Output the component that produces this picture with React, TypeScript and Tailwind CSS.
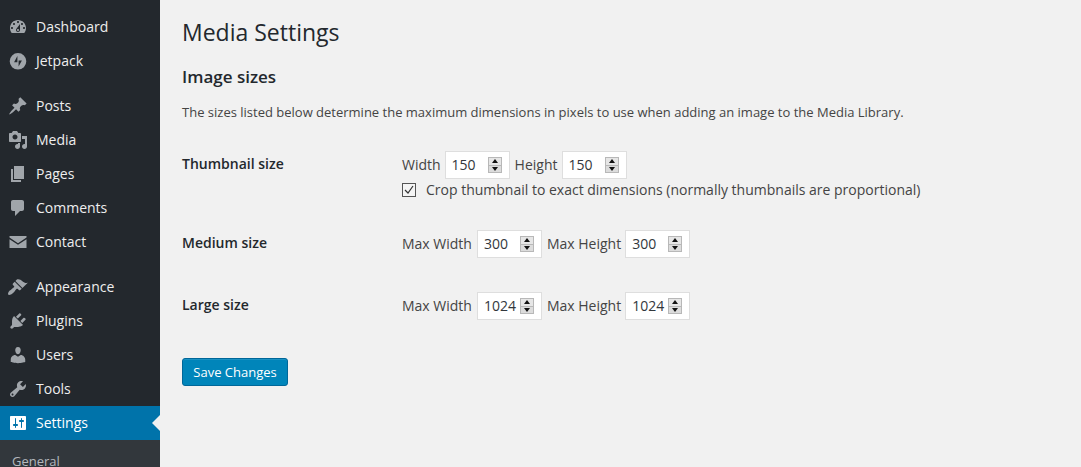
import type { ReactNode } from "react";

type MenuItem = { label: string; icon: ReactNode; active?: boolean };

const Ico = ({ d }: { d: string }) => (
  <svg viewBox="0 0 20 20" className="w-5 h-5 fill-current" fillRule="evenodd">
    <path d={d} />
  </svg>
);

const groups: MenuItem[][] = [
  [
    {
      label: "Dashboard",
      icon: (
        <Ico d="M3.76 16h12.48c1.1-1.37 1.76-3.11 1.76-5 0-4.42-3.58-8-8-8s-8 3.58-8 8c0 1.89.66 3.63 1.76 5zM10 4c.55 0 1 .45 1 1s-.45 1-1 1-1-.45-1-1 .45-1 1-1zM6 6c.55 0 1 .45 1 1s-.45 1-1 1-1-.45-1-1 .45-1 1-1zm8 0c.55 0 1 .45 1 1s-.45 1-1 1-1-.45-1-1 .45-1 1-1zm-5.37 5.55L12 7v6c0 1.1-.9 2-2 2s-2-.9-2-2c0-.57.24-1.08.63-1.45zM4 10c.55 0 1 .45 1 1s-.45 1-1 1-1-.45-1-1 .45-1 1-1zm12 0c.55 0 1 .45 1 1s-.45 1-1 1-1-.45-1-1 .45-1 1-1zm-5 3c0-.55-.45-1-1-1s-1 .45-1 1 .45 1 1 1 1-.45 1-1z" />
      ),
    },
    {
      label: "Jetpack",
      icon: <Ico d="M10 2a8.300 8.300 0 1 0 0 16.600A8.300 8.300 0 0 0 10 2zM9.400 5v6.200H6.100zM10.600 15.600V9.400h3.300z" />,
    },
  ],
  [
    {
      label: "Posts",
      icon: (
        <Ico d="M10.44 3.020l1.820-1.820 6.360 6.350-1.830 1.820c-1.050-.68-2.480-.57-3.410.36l-.75.75c-.92.93-1.040 2.350-.35 3.410l-1.830 1.820-2.410-2.410-2.800 2.790c-.42.42-3.380 2.710-3.800 2.290s1.860-3.390 2.280-3.810l2.790-2.790L4.100 9.360l1.830-1.820c1.050.69 2.480.57 3.400-.36l.75-.75c.93-.92 1.050-2.350.36-3.410z" />
      ),
    },
    {
      label: "Media",
      icon: (
        <Ico d="M13 11V4c0-.55-.45-1-1-1h-1.670L9 1H5L3.670 3H2c-.55 0-1 .45-1 1v7c0 .55.45 1 1 1h10c.55 0 1-.45 1-1zM7 4.500c1.380 0 2.500 1.120 2.500 2.500S8.380 9.500 7 9.500 4.500 8.380 4.500 7 5.620 4.500 7 4.500zM14 6h5v10.500c0 1.380-1.120 2.500-2.500 2.500S14 17.880 14 16.500s1.120-2.500 2.500-2.500c.17 0 .34.02.5.05V9h-3V6zm-4 8.050V13h2v3.500c0 1.380-1.120 2.500-2.500 2.500S7 17.880 7 16.500 8.120 14 9.500 14c.17 0 .34.02.5.05z" />
      ),
    },
    { label: "Pages", icon: <Ico d="M6 15V2h10v13H6zm-1 1h8v2H3V5h2v11z" /> },
    {
      label: "Comments",
      icon: <Ico d="M5 2h9c1.100 0 2 .9 2 2v7c0 1.100-.9 2-2 2h-2l-5 5v-5H5c-1.100 0-2-.9-2-2V4c0-1.100.9-2 2-2z" />,
    },
    { label: "Contact", icon: <Ico d="M1.500 4h17v1.600L10 11.200 1.500 5.600zM1.500 7.200L10 12.800l8.500-5.600V16h-17z" /> },
  ],
  [
    {
      label: "Appearance",
      icon: (
        <Ico d="M14.480 11.060L7.410 3.990l1.500-1.500c.5-.56 2.300-.47 3.510.32 1.210.8 1.430 1.280 2.910 2.100 1.180.64 2.450 1.260 4.450.85zm-.71.71L6.700 4.700 4.930 6.470c-.39.39-.39 1.020 0 1.410l1.060 1.060c.39.39.39 1.030 0 1.420-.6.6-1.430 1.110-2.210 1.690-.35.26-.7.53-1.010.84C1.430 13.260 0 15.300 0 16.750c0 .4.02.62.21.82.2.19.43.43.83.43 1.440 0 3.490-1.430 4.840-2.780.31-.31.58-.66.84-1.010.58-.78 1.080-1.610 1.690-2.210.39-.39 1.020-.39 1.410 0l1.060 1.060c.39.39 1.020.39 1.410 0z" />
      ),
    },
    {
      label: "Plugins",
      icon: (
        <Ico d="M13.110 4.360L9.870 7.600 8 5.730l3.240-3.240c.35-.34 1.050-.2 1.560.32.52.51.66 1.210.31 1.550zm-8 1.770l.91-1.120 9.010 9.010-1.190.84c-.71.71-2.630 1.160-3.820 1.160H6.140L4.900 17.260c-.59.59-1.540.59-2.120 0-.59-.58-.59-1.530 0-2.120l1.240-1.240v-3.880c0-1.130.4-3.190 1.090-3.890zm7.260 3.970l3.240-3.240c.34-.35 1.040-.21 1.550.31.52.51.66 1.210.31 1.550l-3.240 3.250z" />
      ),
    },
    {
      label: "Users",
      icon: (
        <Ico d="M10 9.250c-2.270 0-2.730-3.440-2.730-3.440C7 4.020 7.820 2 9.970 2c2.160 0 2.980 2.020 2.710 3.810 0 0-.41 3.440-2.680 3.440zm0 2.570L12.720 10c2.390 0 4.520 2.330 4.520 4.530v2.490s-3.650 1.130-7.240 1.130c-3.650 0-7.240-1.130-7.240-1.130v-2.490c0-2.250 1.940-4.480 4.470-4.480z" />
      ),
    },
    {
      label: "Tools",
      icon: (
        <Ico d="M16.680 9.770c-1.340 1.340-3.300 1.670-4.950.99l-5.410 6.520c-.99.99-2.590.99-3.580 0s-.99-2.590 0-3.570l6.520-5.420c-.68-1.650-.35-3.610.99-4.950 1.280-1.280 3.120-1.620 4.720-1.060l-2.890 2.890 2.820 2.820 2.860-2.870c.53 1.580.18 3.390-1.080 4.650zM3.810 16.210c.4.39 1.040.39 1.430 0 .4-.4.4-1.040 0-1.430-.39-.4-1.030-.4-1.430 0-.39.39-.39 1.030 0 1.430z" />
      ),
    },
    {
      label: "Settings",
      active: true,
      icon: (
        <Ico d="M18 16V4c0-.55-.45-1-1-1H3c-.55 0-1 .45-1 1v12c0 .55.45 1 1 1h14c.55 0 1-.45 1-1zM8 11h1c.55 0 1 .45 1 1s-.45 1-1 1H8v1.500c0 .28-.22.5-.5.5s-.5-.22-.5-.5V13H6c-.55 0-1-.45-1-1s.45-1 1-1h1V5.500c0-.28.22-.5.5-.5s.5.22.5.5V11zm5-2h-1c-.55 0-1-.45-1-1s.45-1 1-1h1V5.500c0-.28.22-.5.5-.5s.5.22.5.5V7h1c.55 0 1 .45 1 1s-.45 1-1 1h-1v5.500c0 .28-.22.5-.5.5s-.5-.22-.5-.5V9z" />
      ),
    },
  ],
];

function Sidebar() {
  return (
    <aside className="w-[160px] shrink-0 bg-[#23282d] pt-[10px] overflow-hidden">
      <div className="flex flex-col gap-[11px]">
        {groups.map((group) => (
          <ul key={group[0].label}>
            {group.map((item) => (
              <li
                key={item.label}
                className={
                  item.active
                    ? "relative flex items-center h-[34px] bg-[#0073aa] text-white"
                    : "flex items-center h-[34px] text-[#eeeeee]"
                }
              >
                <span className={item.active ? "w-[36px] pl-[8px] text-white" : "w-[36px] pl-[8px] text-[#a0a5aa]"}>
                  {item.icon}
                </span>
                <span className="pb-[2px]">{item.label}</span>
                {item.active && (
                  <span className="absolute right-0 top-[9px] border-y-[8px] border-r-[8px] border-y-transparent border-r-[#f1f1f1]" />
                )}
              </li>
            ))}
          </ul>
        ))}
      </div>
      <div className="h-[27px] bg-[#32373c] pl-[12px] pt-[12px] text-[13px] leading-[18px] text-[#b4b9be]">General</div>
    </aside>
  );
}

function NumberField({ value }: { value: number }) {
  return (
    <span className="flex items-center justify-between h-[28px] w-[65px] border border-[#dedede] bg-white pl-[6px] pr-[7px] text-[14px] text-[#32373c]">
      <span className="pb-[2px]">{value}</span>
      <span className="flex flex-col w-[14px] h-[16px] border border-[#b8b8b8] bg-[#e6e6e6]">
        <span className="flex flex-1 items-center justify-center border-b border-[#b8b8b8]">
          <span className="border-x-[3.5px] border-b-[4px] border-x-transparent border-b-[#111111]" />
        </span>
        <span className="flex flex-1 items-center justify-center bg-[#dcdcdc]">
          <span className="border-x-[3.5px] border-t-[4px] border-x-transparent border-t-[#111111]" />
        </span>
      </span>
    </span>
  );
}

function SizePair({ a, b, value, tight }: { a: string; b: string; value: number; tight?: boolean }) {
  return (
    <div className="flex items-center text-[14px] text-[#444444]">
      <span className={tight ? "mr-[4px] pb-[2px]" : "mr-[5px] pb-[2px]"}>{a}</span>
      <NumberField value={value} />
      <span className="ml-[5px] mr-[4px] pb-[2px]">{b}</span>
      <NumberField value={value} />
    </div>
  );
}

export default function App() {
  return (
    <div
      className="flex w-[1081px] h-[467px] overflow-hidden bg-[#f1f1f1] text-[#444444]"
      style={{ fontFamily: '"Open Sans", sans-serif', fontSize: 14 }}
    >
      <Sidebar />
      <main className="flex-1 pl-[22px]">
        <h1 className="mt-[16px] text-[23px] leading-[32px] text-[#23282d]">Media Settings</h1>
        <h2 className="mt-[17px] text-[17px] leading-[24px] font-semibold text-[#23282d]">Image sizes</h2>
        <p className="mt-[14px] text-[13px] leading-[18px]">
          The sizes listed below determine the maximum dimensions in pixels to use when adding an image to the Media
          Library.
        </p>

        <div className="mt-[30px] flex">
          <div className="w-[220px] pt-[2px] font-semibold text-[#23282d]">Thumbnail size</div>
          <div>
            <SizePair a="Width" b="Height" value={150} tight />
            <label className="flex items-center h-[22px]">
              <span className="flex items-center justify-center w-[14px] h-[14px] border border-[#555555] bg-[#f5f5f5]">
                <svg viewBox="0 0 12 12" className="w-3 h-3 fill-none stroke-[#333333] stroke-[1.2]">
                  <path d="M2 6l3 3 5-7" />
                </svg>
              </span>
              <span className="ml-[10px] pb-[2px]">
                Crop thumbnail to exact dimensions (normally thumbnails are proportional)
              </span>
            </label>
          </div>
        </div>

        <div className="mt-[29px] flex">
          <div className="w-[220px] pt-[2px] font-semibold text-[#23282d]">Medium size</div>
          <SizePair a="Max Width" b="Max Height" value={300} />
        </div>

        <div className="mt-[34px] flex">
          <div className="w-[220px] pt-[2px] font-semibold text-[#23282d]">Large size</div>
          <SizePair a="Max Width" b="Max Height" value={1024} />
        </div>

        <button className="mt-[38px] h-[28px] w-[106px] rounded-[3px] border border-[#006799] bg-[#0085ba] pt-[1px] text-[13px] text-white shadow-[inset_0_1px_0_#1a92c4]">
          Save Changes
        </button>
      </main>
    </div>
  );
}
